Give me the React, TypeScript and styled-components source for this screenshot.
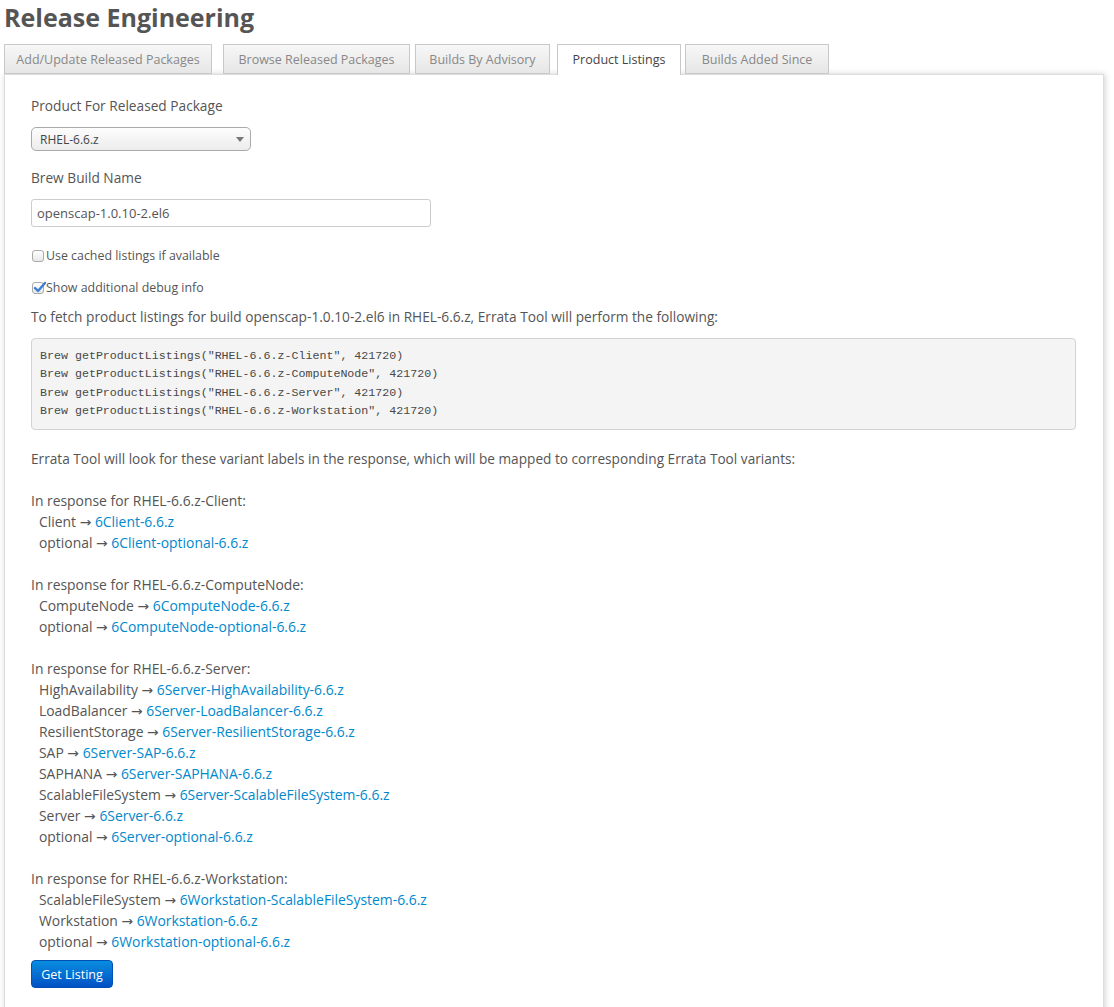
import React from "react";
import styled, { createGlobalStyle } from "styled-components";

const Global = createGlobalStyle`
  html, body { margin: 0; padding: 0; background: #fff; }
  body {
    font-family: "Open Sans", "DejaVu Sans", sans-serif;
    font-size: 13.7px;
    color: #555;
  }
`;

const Page = styled.div`
  padding: 0 0 0 4px;
  width: 1100px;
`;

const Title = styled.h1`
  margin: 0;
  padding: 0;
  font-size: 25px;
  line-height: 34px;
  font-weight: 700;
  color: #555;
  height: 44px;
`;

const TabBar = styled.div`
  display: flex;
  align-items: flex-end;
  height: 30px;
  position: relative;
  z-index: 2;
`;

const Tab = styled.div<{ $active?: boolean; $w: number; $gap: number }>`
  width: ${(p) => p.$w}px;
  margin-right: ${(p) => p.$gap}px;
  height: ${(p) => (p.$active ? 31 : 30)}px;
  box-sizing: border-box;
  border: 1px solid #c8c8c8;
  border-bottom: ${(p) => (p.$active ? "none" : "1px solid #c8c8c8")};
  background: ${(p) =>
    p.$active ? "#fff" : "linear-gradient(#f7f7f7, #e6e6e6)"};
  color: ${(p) => (p.$active ? "#444" : "#888")};
  font-size: 12.5px;
  text-align: center;
  line-height: 30px;
  align-self: flex-start;
  white-space: nowrap;
`;

const Panel = styled.div`
  width: 1100px;
  box-sizing: border-box;
  border: 1px solid #ddd;
  border-bottom: none;
  box-shadow: 1px 0 6px rgba(0, 0, 0, 0.18);
  padding: 21px 27px 40px 26px;
  min-height: 960px;
  background: #fff;
`;

const Label = styled.div`
  line-height: 20px;
  margin-bottom: 11px;
`;

const Select = styled.div`
  width: 220px;
  height: 24px;
  box-sizing: border-box;
  border: 1px solid #aaa;
  border-radius: 5px;
  background: linear-gradient(#fdfdfd, #ececec);
  display: flex;
  align-items: center;
  justify-content: space-between;
  padding: 0 6px 0 8px;
  font-size: 12px;
  color: #444;
  margin-bottom: 17px;
`;

const Arrow = styled.span`
  width: 0;
  height: 0;
  border-left: 4px solid transparent;
  border-right: 4px solid transparent;
  border-top: 5px solid #777;
`;

const Input = styled.div`
  width: 400px;
  height: 28px;
  box-sizing: border-box;
  border: 1px solid #ccc;
  border-radius: 3px;
  padding: 0 5px;
  line-height: 26px;
  font-size: 13px;
  color: #555;
  margin-bottom: 19px;
`;

const CheckRow = styled.label<{ $gap: number }>`
  display: flex;
  align-items: center;
  font-size: 12.4px;
  line-height: 20px;
  height: 20px;
  margin-bottom: ${(p) => p.$gap}px;
`;

const Box = styled.span`
  width: 12px;
  height: 12px;
  box-sizing: border-box;
  border: 1px solid #aaa;
  border-radius: 3px;
  background: linear-gradient(#fff, #e8e8e8);
  margin: 0 2px 0 1px;
  position: relative;
  flex: none;
`;

const Check = styled.svg`
  position: absolute;
  left: 0px;
  top: -2px;
`;

const Para = styled.p`
  margin: 0 0 11px 0;
  line-height: 20px;
`;

const Pre = styled.pre`
  margin: 0 0 18px 0;
  background: #f4f4f4;
  border: 1px solid #d3d3d3;
  border-radius: 4px;
  padding: 8px 8px 9px 8px;
  font-family: "Liberation Mono", "DejaVu Sans Mono", monospace;
  font-size: 11.65px;
  line-height: 18.3px;
  color: #484848;
`;

const Listing = styled.div`
  line-height: 21px;
  font-size: 13.9px;
`;

const Intro = styled.div`
  font-size: 13.65px;
`;

const Group = styled.div`
  margin-top: 21px;
`;

const Item = styled.div`
  padding-left: 8px;
`;

const Link = styled.a`
  color: #0088cc;
  text-decoration: none;
`;

const Button = styled.button`
  display: block;
  margin-top: 8px;
  height: 28px;
  width: 82px;
  border: 1px solid #0050b3;
  border-radius: 4px;
  background: linear-gradient(#0a8de0, #0051c4);
  color: #fff;
  font-family: inherit;
  font-size: 12.5px;
  padding: 0;
`;

const tabs = [
  { label: "Add/Update Released Packages", w: 208, gap: 11 },
  { label: "Browse Released Packages", w: 187, gap: 5 },
  { label: "Builds By Advisory", w: 135, gap: 7 },
  { label: "Product Listings", w: 124, gap: 4, active: true },
  { label: "Builds Added Since", w: 144, gap: 0 },
];

const groups: { title: string; items: [string, string][] }[] = [
  {
    title: "In response for RHEL-6.6.z-Client:",
    items: [
      ["Client", "6Client-6.6.z"],
      ["optional", "6Client-optional-6.6.z"],
    ],
  },
  {
    title: "In response for RHEL-6.6.z-ComputeNode:",
    items: [
      ["ComputeNode", "6ComputeNode-6.6.z"],
      ["optional", "6ComputeNode-optional-6.6.z"],
    ],
  },
  {
    title: "In response for RHEL-6.6.z-Server:",
    items: [
      ["HighAvailability", "6Server-HighAvailability-6.6.z"],
      ["LoadBalancer", "6Server-LoadBalancer-6.6.z"],
      ["ResilientStorage", "6Server-ResilientStorage-6.6.z"],
      ["SAP", "6Server-SAP-6.6.z"],
      ["SAPHANA", "6Server-SAPHANA-6.6.z"],
      ["ScalableFileSystem", "6Server-ScalableFileSystem-6.6.z"],
      ["Server", "6Server-6.6.z"],
      ["optional", "6Server-optional-6.6.z"],
    ],
  },
  {
    title: "In response for RHEL-6.6.z-Workstation:",
    items: [
      ["ScalableFileSystem", "6Workstation-ScalableFileSystem-6.6.z"],
      ["Workstation", "6Workstation-6.6.z"],
      ["optional", "6Workstation-optional-6.6.z"],
    ],
  },
];

export default function App() {
  return (
    <Page>
      <Global />
      <Title>Release Engineering</Title>
      <TabBar>
        {tabs.map((t) => (
          <Tab key={t.label} $w={t.w} $gap={t.gap} $active={t.active}>
            {t.label}
          </Tab>
        ))}
      </TabBar>
      <Panel>
        <Label>Product For Released Package</Label>
        <Select>
          <span>RHEL-6.6.z</span>
          <Arrow />
        </Select>
        <Label>Brew Build Name</Label>
        <Input>openscap-1.0.10-2.el6</Input>
        <CheckRow $gap={12}>
          <Box />
          Use cached listings if available
        </CheckRow>
        <CheckRow $gap={9}>
          <Box>
            <Check width="13" height="13" viewBox="0 0 13 13">
              <path
                d="M2 7 L5 10 L12 2"
                fill="none"
                stroke="#3a7fd6"
                strokeWidth="2.4"
                strokeLinecap="round"
                strokeLinejoin="round"
              />
            </Check>
          </Box>
          Show additional debug info
        </CheckRow>
        <Para>
          To fetch product listings for build openscap-1.0.10-2.el6 in
          RHEL-6.6.z, Errata Tool will perform the following:
        </Para>
        <Pre>
          {`Brew getProductListings("RHEL-6.6.z-Client", 421720)
Brew getProductListings("RHEL-6.6.z-ComputeNode", 421720)
Brew getProductListings("RHEL-6.6.z-Server", 421720)
Brew getProductListings("RHEL-6.6.z-Workstation", 421720)`}
        </Pre>
        <Listing>
          <Intro>
            Errata Tool will look for these variant labels in the response,
            which will be mapped to corresponding Errata Tool variants:
          </Intro>
          {groups.map((g) => (
            <Group key={g.title}>
              <div>{g.title}</div>
              {g.items.map(([k, v]) => (
                <Item key={v}>
                  {k} → <Link href="#">{v}</Link>
                </Item>
              ))}
            </Group>
          ))}
        </Listing>
        <Button>Get Listing</Button>
      </Panel>
    </Page>
  );
}
